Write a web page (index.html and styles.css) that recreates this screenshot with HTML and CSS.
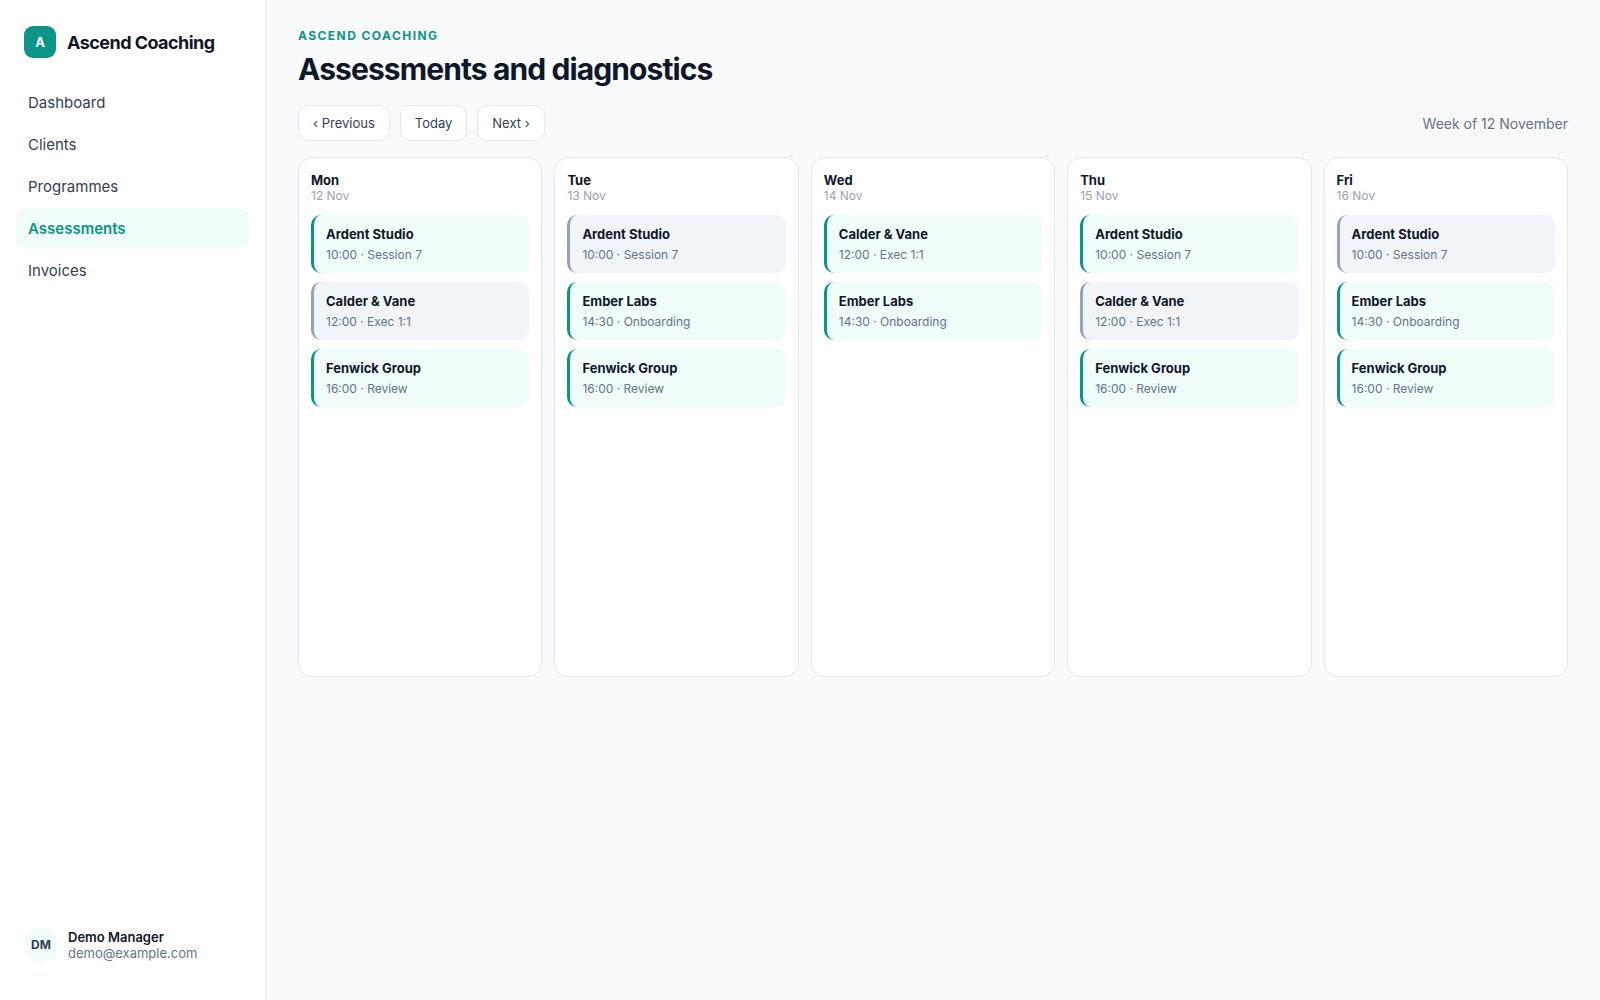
FILE: index.html
```html
<!DOCTYPE html>
<html lang="en">
<head>
    <meta charset="UTF-8">
    <meta name="viewport" content="width=device-width, initial-scale=1.0">
    <title>Assessments and diagnostics</title>
    <link rel="stylesheet" href="styles.css">
</head>
<body>
    <div class="app">
        <aside class="sidebar">
            <div class="brand">
                <span class="logo">A</span>
                <span class="brand-name">Ascend Coaching</span>
            </div>
            <nav class="nav">
                <a href="#">Dashboard</a>
                <a href="#">Clients</a>
                <a href="#">Programmes</a>
                <a href="#" class="active">Assessments</a>
                <a href="#">Invoices</a>
            </nav>
            <div class="user">
                <span class="avatar">DM</span>
                <div>
                    <div class="user-name">Demo Manager</div>
                    <div class="user-email">demo@example.com</div>
                </div>
            </div>
        </aside>

        <main class="main">
            <div class="eyebrow">Ascend Coaching</div>
            <h1>Assessments and diagnostics</h1>

            <div class="toolbar">
                <button type="button">‹ Previous</button>
                <button type="button">Today</button>
                <button type="button">Next ›</button>
                <span class="week">Week of 12 November</span>
            </div>

            <div class="calendar">
                <section class="day">
                    <h2>Mon</h2>
                    <div class="date">12 Nov</div>
                    <div class="event"><strong>Ardent Studio</strong><span>10:00 · Session 7</span></div>
                    <div class="event muted"><strong>Calder &amp; Vane</strong><span>12:00 · Exec 1:1</span></div>
                    <div class="event"><strong>Fenwick Group</strong><span>16:00 · Review</span></div>
                </section>
                <section class="day">
                    <h2>Tue</h2>
                    <div class="date">13 Nov</div>
                    <div class="event muted"><strong>Ardent Studio</strong><span>10:00 · Session 7</span></div>
                    <div class="event"><strong>Ember Labs</strong><span>14:30 · Onboarding</span></div>
                    <div class="event"><strong>Fenwick Group</strong><span>16:00 · Review</span></div>
                </section>
                <section class="day">
                    <h2>Wed</h2>
                    <div class="date">14 Nov</div>
                    <div class="event"><strong>Calder &amp; Vane</strong><span>12:00 · Exec 1:1</span></div>
                    <div class="event"><strong>Ember Labs</strong><span>14:30 · Onboarding</span></div>
                </section>
                <section class="day">
                    <h2>Thu</h2>
                    <div class="date">15 Nov</div>
                    <div class="event"><strong>Ardent Studio</strong><span>10:00 · Session 7</span></div>
                    <div class="event muted"><strong>Calder &amp; Vane</strong><span>12:00 · Exec 1:1</span></div>
                    <div class="event"><strong>Fenwick Group</strong><span>16:00 · Review</span></div>
                </section>
                <section class="day">
                    <h2>Fri</h2>
                    <div class="date">16 Nov</div>
                    <div class="event muted"><strong>Ardent Studio</strong><span>10:00 · Session 7</span></div>
                    <div class="event"><strong>Ember Labs</strong><span>14:30 · Onboarding</span></div>
                    <div class="event"><strong>Fenwick Group</strong><span>16:00 · Review</span></div>
                </section>
            </div>
        </main>
    </div>
</body>
</html>
```

FILE: styles.css
```css
* {
    box-sizing: border-box;
}
body {
    margin: 0;
    font-family: Inter, sans-serif;
    font-size: 15px;
    color: #0f172a;
    background: #f8fafc;
}
h1, h2 {
    margin: 0;
}
.app {
    display: flex;
    min-height: 100vh;
}
.sidebar {
    display: flex;
    flex-direction: column;
    flex: 0 0 266px;
    padding: 26px 16px 30px;
    background: #fff;
    border-right: 1px solid #e2e8f0;
}
.brand {
    display: flex;
    align-items: center;
    gap: 11px;
    padding: 0 8px;
    margin-bottom: 24px;
}
.logo {
    display: flex;
    align-items: center;
    justify-content: center;
    width: 32px;
    height: 32px;
    border-radius: 9px;
    background: #0d9488;
    color: #fff;
    font-size: 13px;
    font-weight: 700;
}
.brand-name {
    font-size: 18px;
    font-weight: 700;
    letter-spacing: -0.03em;
}
.nav {
    display: flex;
    flex-direction: column;
    gap: 2px;
}
.nav a {
    padding: 11px 12px 9px;
    border-radius: 10px;
    color: #334155;
    line-height: 20px;
    text-decoration: none;
}
.nav a.active {
    background: #f0fdfa;
    color: #0d9488;
    font-weight: 600;
}
.user {
    display: flex;
    align-items: center;
    gap: 10px;
    margin-top: auto;
    padding: 8px;
    font-size: 13px;
    line-height: 16px;
}
.avatar {
    display: flex;
    align-items: center;
    justify-content: center;
    width: 34px;
    height: 34px;
    border-radius: 50%;
    background: #f0fdfa;
    color: #334155;
    font-size: 12px;
    font-weight: 700;
}
.user-name {
    font-weight: 600;
}
.user-email {
    color: #64748b;
}
.main {
    flex: 1;
    min-width: 0;
    padding: 28px 32px;
}
.eyebrow {
    color: #0d9488;
    font-size: 12px;
    font-weight: 700;
    line-height: 15px;
    letter-spacing: 0.12em;
    text-transform: uppercase;
}
h1 {
    margin-top: 6px;
    font-size: 30px;
    font-weight: 700;
    line-height: 40px;
    letter-spacing: -0.03em;
}
.toolbar {
    display: flex;
    align-items: center;
    gap: 10px;
    margin: 16px 0;
}
button {
    padding: 9px 14px;
    border: 1px solid #e2e8f0;
    border-radius: 10px;
    background: #fff;
    color: #334155;
    font-family: inherit;
    font-size: 13px;
    line-height: 16px;
    cursor: pointer;
}
.week {
    margin-left: auto;
    color: #64748b;
    font-size: 14px;
}
.calendar {
    display: grid;
    grid-template-columns: repeat(5, 1fr);
    gap: 12px;
}
.day {
    min-height: 520px;
    padding: 14px 12px;
    border: 1px solid #e2e8f0;
    border-radius: 14px;
    background: #fff;
}
.day h2 {
    font-size: 13px;
    font-weight: 700;
    line-height: 16px;
}
.date {
    margin-bottom: 12px;
    color: #94a3b8;
    font-size: 12px;
    line-height: 15px;
}
.event {
    margin-bottom: 9px;
    padding: 10px 12px;
    border-left: 3px solid #0d9488;
    border-radius: 10px;
    background: #f0fdfa;
}
.event.muted {
    border-left-color: #94a3b8;
    background: #f1f5f9;
}
.event strong {
    display: block;
    font-size: 13px;
    font-weight: 700;
    line-height: 18px;
}
.event span {
    display: block;
    margin-top: 4px;
    color: #64748b;
    font-size: 12px;
    line-height: 16px;
}
```
